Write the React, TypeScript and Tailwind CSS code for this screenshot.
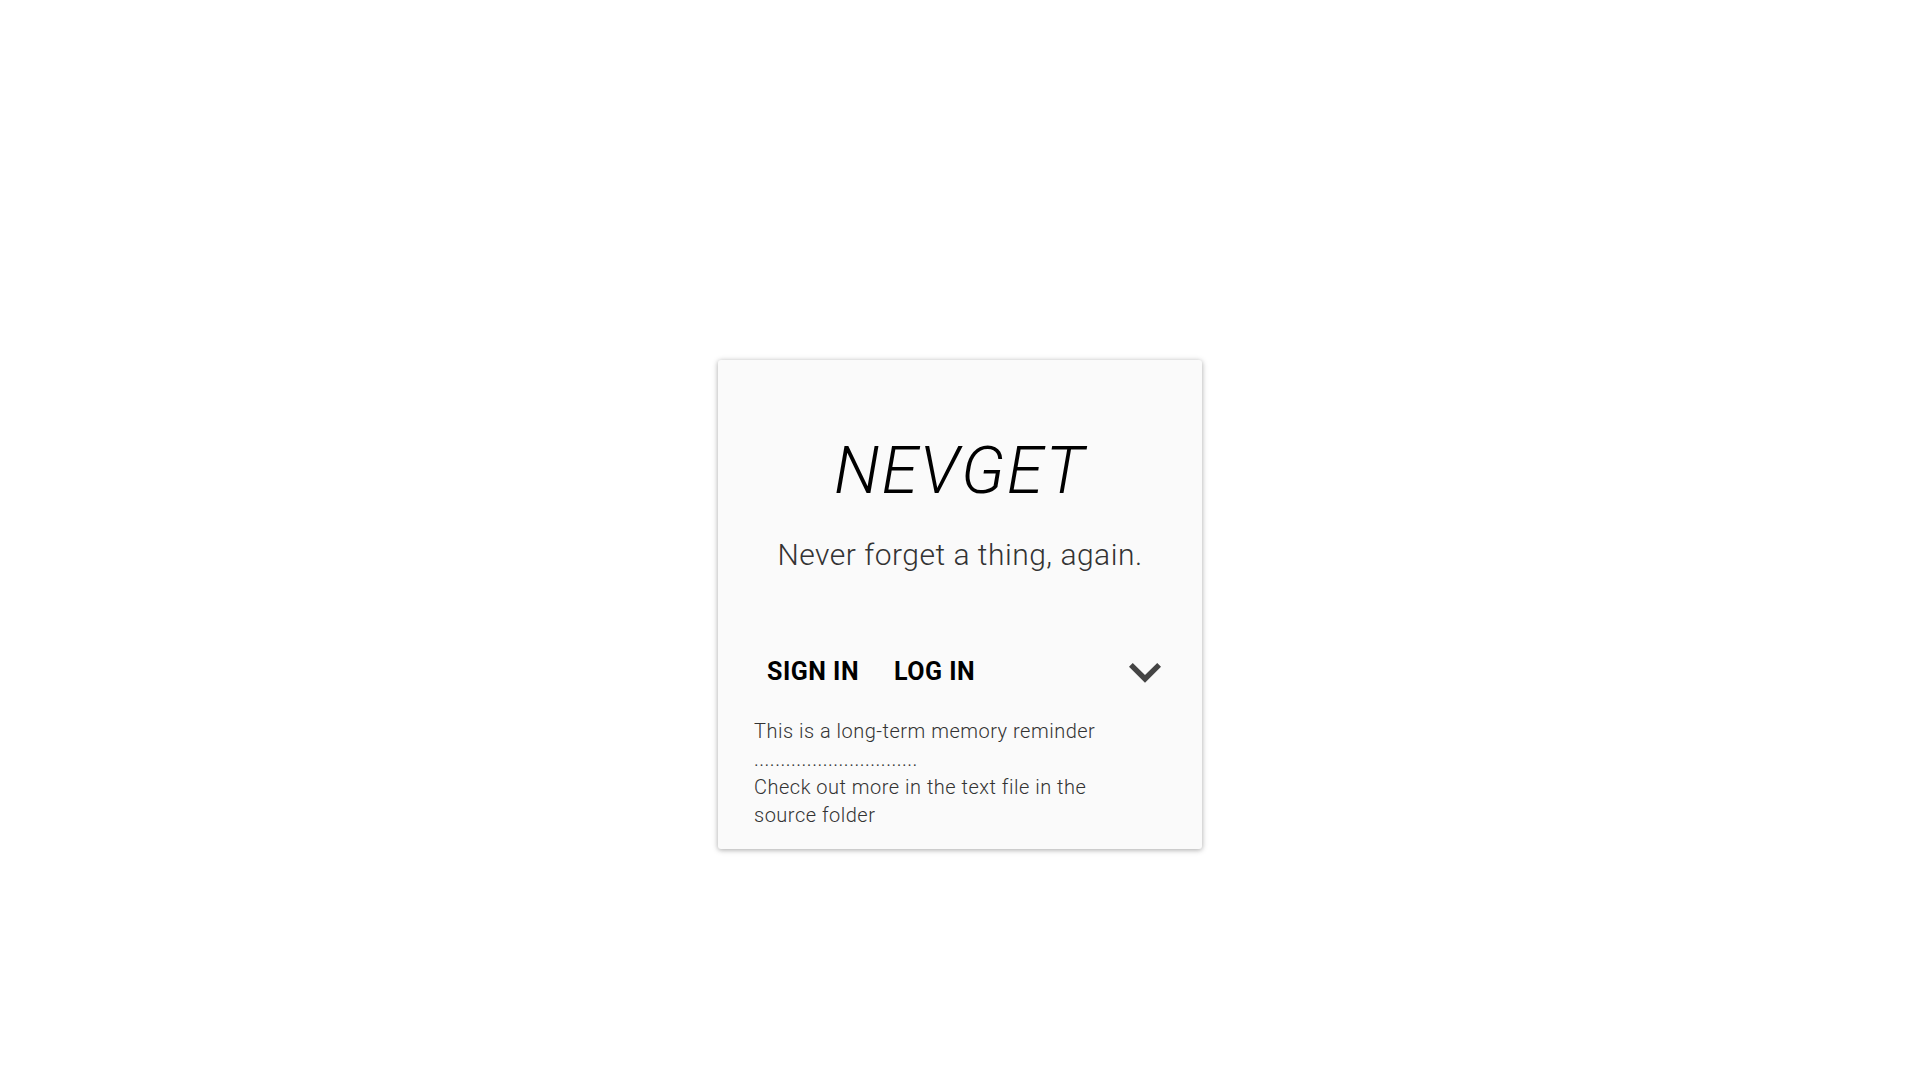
import { useState } from "react";

function ChevronDown() {
  return (
    <svg width="64" height="64" viewBox="0 0 24 24" className="fill-[#444444]">
      <path d="M16.59 8.59L12 13.17 7.41 8.59 6 10l6 6 6-6z" />
    </svg>
  );
}

function App() {
  const [open, setOpen] = useState(false);

  return (
    <div className="min-h-screen w-full bg-white font-['Roboto',sans-serif]">
      <div className="flex justify-center pt-[360px]">
        {/* Card */}
        <div className="w-[484px] rounded-[3px] bg-[#fafafa] pb-[20px] shadow-[0_1px_6px_rgba(0,0,0,0.22),0_1px_4px_rgba(0,0,0,0.15)]">
          <h1 className="mt-[78px] text-center text-[66px] leading-[66px] font-light italic tracking-[2px] text-black">
            NEVGET
          </h1>
          <p className="mt-[33px] text-center text-[30px] leading-[36px] font-light tracking-[0.5px] text-[#333]">
            Never forget a thing, again.
          </p>

          {/* Buttons */}
          <div className="mt-[67px] flex h-16 items-center pl-[49px] pr-[25px]">
            <button className="text-[25px] leading-8 font-bold tracking-[0.5px] text-black">
              SIGN IN
            </button>
            <button className="ml-[35px] text-[25px] leading-8 font-bold tracking-[0.5px] text-black">
              LOG IN
            </button>
            <button className="ml-auto" onClick={() => setOpen(!open)}>
              <ChevronDown />
            </button>
          </div>

          <div className="mt-[13px] ml-[36px] w-[365px] text-[20px] leading-[28px] font-light tracking-[0.5px] text-[#333]">
            <p>This is a long-term memory reminder</p>
            <p>...............................</p>
            <p>Check out more in the text file in the source folder</p>
          </div>
        </div>
      </div>
    </div>
  );
}

export default App;
